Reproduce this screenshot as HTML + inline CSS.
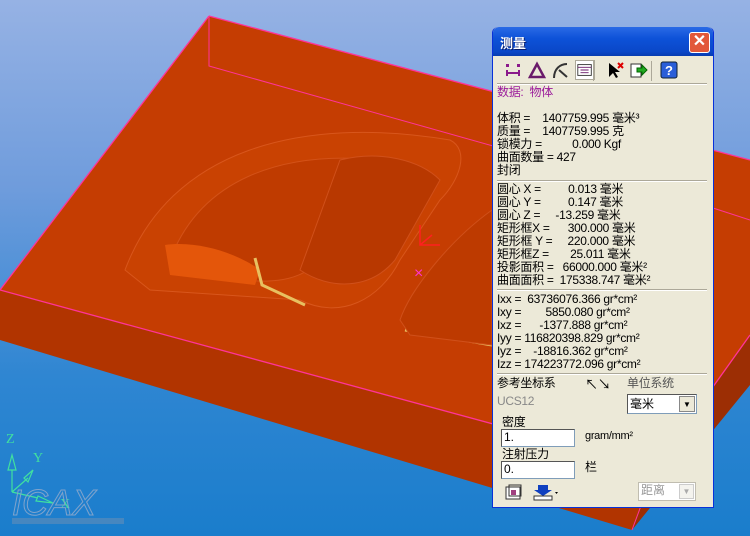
<!DOCTYPE html>
<html><head><meta charset="utf-8">
<style>
*{margin:0;padding:0;box-sizing:border-box}
body{width:750px;height:536px;overflow:hidden;position:relative;font-family:"Liberation Sans","Noto Sans CJK SC",sans-serif;background:linear-gradient(#96b2e4 0%,#6f9cdc 35%,#2f86d2 70%,#1a7dcc 100%)}
.p{position:absolute;left:492px;top:27px;width:222px;height:481px;background:#ece9d8;border:1px solid #0831d9;border-top:none;border-radius:6px 6px 0 0}
.tb{position:absolute;left:0;top:0;width:220px;height:29px;background:linear-gradient(#2a6ae6,#0d52d8 40%,#0a47c8 85%,#083cb0);border-radius:6px 6px 0 0}
.tb span{position:absolute;left:7px;top:6px;color:#fff;font-weight:bold;font-size:13px;text-shadow:1px 1px #0a1e6e}
.cl{position:absolute;left:196px;top:5px;width:21px;height:21px;background:#e2583a;border:1px solid #fff;border-radius:3px;color:#fff;font-size:16px;line-height:18px;text-align:center;font-weight:bold}
.t{position:absolute;left:4px;font-size:12px;line-height:13px;color:#000;white-space:pre;letter-spacing:-0.3px}
.sep{position:absolute;left:4px;width:210px;height:2px;border-top:1px solid #aca899;border-bottom:1px solid #fff}
.in{position:absolute;background:#fff;border:1px solid #7f9db9;border-top-color:#555;border-left-color:#555;font-size:12px;padding-left:2px;line-height:15px}
.ic{position:absolute;top:33px;width:20px;height:20px}
</style></head><body>
<svg width="750" height="536" style="position:absolute;left:0;top:0">
<polygon points="0,290 655,468 632,530 0,340" fill="#b13400"/>
<polygon points="655,468 750,335 750,385 632,530" fill="#9c2e04"/>
<polygon points="209,16 750,160 750,335 655,468 0,290" fill="#c53d02"/>
<polyline points="209,16 750,160" stroke="#ff3399" stroke-width="1.3" fill="none"/>
<polyline points="209,16 0,290 655,468 750,335" stroke="#ff3399" stroke-width="1.3" fill="none"/>
<polyline points="655,468 632,530" stroke="#ff3399" stroke-width="1" fill="none"/>
<polyline points="209,16 209,66 713,208 750,220" stroke="#ff3399" stroke-width="1" fill="none"/>
<path d="M125,270 C170,150 300,115 450,140 C470,150 460,180 440,200 L400,260 C380,300 340,320 300,300 L150,290 Z" fill="#c94202" stroke="#d8561c" stroke-width="1"/>
<path d="M170,260 C200,180 280,150 380,160 L330,250 C300,290 260,280 230,280 Z" fill="#bf3b00" stroke="#d35218"/>
<path d="M165,245 C200,240 240,255 260,270 L255,285 L170,275 Z" fill="#e4560a"/>
<path d="M340,160 C380,150 420,160 440,180 L395,260 C370,290 330,290 300,270 Z" fill="#b83800" stroke="#d0501a"/>
<path d="M255,258 L262,285 L305,305" stroke="#e8c060" stroke-width="3" fill="none"/>
<path d="M405,330 L492,345" stroke="#e8c060" stroke-width="3" fill="none"/>
<path d="M400,320 C410,290 450,240 492,210 L492,345 L410,335 Z" fill="#bd3a00" stroke="#d0501a"/>
<text x="414" y="278" fill="#ff33cc" font-size="16" font-family="Liberation Sans">×</text>
<path d="M420,225 L420,245 L440,245 M420,245 L432,235" stroke="#ff2020" stroke-width="1.5" fill="none"/>
<g stroke="#40e0a0" fill="none" stroke-width="1.2"><path d="M12,492 L12,470 M8,470 L12,455 L16,470 Z M12,492 L28,478 M24,478 L33,470 L28,482 Z M12,492 L38,498 M38,496 L53,503 L36,501 Z"/></g>
<text x="6" y="443" fill="#40e0a0" font-size="14" font-family="Liberation Serif">Z</text>
<text x="33" y="462" fill="#40e0a0" font-size="14" font-family="Liberation Serif">Y</text>
<text x="60" y="508" fill="#40e0a0" font-size="14" font-family="Liberation Serif">X</text>
<text x="12" y="515" fill="none" stroke="#7fa3cc" stroke-width="1" font-size="36" font-style="italic" font-family="Liberation Sans">ICAX</text>
<rect x="12" y="518" width="112" height="6" fill="#6f90b4" opacity=".5"/>
</svg>
<div class="p">
<div class="tb"><span>测量</span><div class="cl">✕</div></div>
<svg class="ic" style="left:10px" viewBox="0 0 20 20"><g fill="#8b1a8b"><rect x="3" y="4" width="3" height="3"/><rect x="14" y="4" width="3" height="3"/><rect x="3" y="10" width="2" height="6"/><rect x="15" y="10" width="2" height="6"/><rect x="5" y="12" width="10" height="2"/></g></svg>
<svg class="ic" style="left:34px" viewBox="0 0 20 20"><path d="M3,17 L10,4 L17,17 Z" stroke="#6a1a6a" stroke-width="2.5" fill="none"/></svg>
<svg class="ic" style="left:58px" viewBox="0 0 20 20"><path d="M3,18 C3,9 9,4 16,4 M8,10 L16,17" stroke="#333" stroke-width="2" fill="none"/></svg>
<svg class="ic" style="left:82px;background:#fff;border:1px solid #aca899" viewBox="0 0 20 20"><rect x="2" y="4" width="15" height="12" fill="#fff" stroke="#333"/><path d="M2,7 H17 M5,10 H14 M5,13 H14" stroke="#6a1a6a"/></svg>
<svg class="ic" style="left:112px" viewBox="0 0 20 20"><path d="M4,3 L4,17 L8,13 L11,18 L13,17 L10,12 L15,12 Z" fill="#000"/><path d="M13,3 L18,8 M18,3 L13,8" stroke="#d00" stroke-width="2"/></svg>
<svg class="ic" style="left:135px" viewBox="0 0 20 20"><rect x="3" y="4" width="10" height="13" fill="#fff" stroke="#333"/><path d="M9,8 H14 V5 L19,10 L14,15 V12 H9 Z" fill="#2a2" stroke="#060"/></svg>
<svg class="ic" style="left:166px" viewBox="0 0 20 20"><rect x="2" y="2" width="16" height="16" rx="2" fill="#2a5ed8" stroke="#123"/><text x="6" y="15" fill="#fff" font-size="13" font-weight="bold" font-family="Liberation Sans">?</text></svg>
<div style="position:absolute;left:100px;top:34px;width:1px;height:20px;background:#aca899"></div>
<div style="position:absolute;left:158px;top:34px;width:1px;height:20px;background:#aca899"></div>
<div class="sep" style="top:56px"></div>
<div class="t" style="top:59px;color:#9b1b9b">数据:  物体</div>
<div class="t" style="top:85px">体积 =    1407759.995 毫米³
质量 =    1407759.995 克
锁模力 =          0.000 Kgf
曲面数量 = 427
封闭</div>
<div class="sep" style="top:153px"></div>
<div class="t" style="top:156px">圆心 X =         0.013 毫米
圆心 Y =         0.147 毫米
圆心 Z =     -13.259 毫米
矩形框X =      300.000 毫米
矩形框 Y =     220.000 毫米
矩形框Z =       25.011 毫米
投影面积 =   66000.000 毫米²
曲面面积 =  175338.747 毫米²</div>
<div class="sep" style="top:262px"></div>
<div class="t" style="top:266px">Ixx =  63736076.366 gr*cm²
Ixy =        5850.080 gr*cm²
Ixz =      -1377.888 gr*cm²
Iyy = 116820398.829 gr*cm²
Iyz =    -18816.362 gr*cm²
Izz = 174223772.096 gr*cm²</div>
<div class="sep" style="top:346px"></div>
<div class="t" style="top:350px">参考坐标系</div>
<div class="t" style="top:368px;color:#888">UCS12</div>
<div class="t" style="left:92px;top:351px;font-size:13px">↖↘</div>
<div class="t" style="left:134px;top:350px;color:#555">单位系统</div>
<div class="in" style="left:134px;top:367px;width:70px;height:20px;line-height:18px">毫米<span style="position:absolute;right:1px;top:1px;width:16px;height:16px;background:#ece9d8;border:1px solid #888;font-size:8px;text-align:center;line-height:15px">▼</span></div>
<div class="t" style="left:9px;top:389px">密度</div>
<div class="in" style="left:8px;top:402px;width:74px;height:18px">1.</div>
<div class="t" style="left:92px;top:403px;font-size:11px">gram/mm²</div>
<div class="t" style="left:9px;top:421px">注射压力</div>
<div class="in" style="left:8px;top:434px;width:74px;height:18px">0.</div>
<div class="t" style="left:92px;top:434px">栏</div>
<svg style="position:absolute;left:12px;top:457px" width="18" height="16"><rect x="1" y="3" width="14" height="12" fill="#fff" stroke="#333"/><rect x="4" y="1" width="12" height="11" fill="none" stroke="#333"/><rect x="6" y="6" width="5" height="5" fill="#a04080"/></svg>
<svg style="position:absolute;left:40px;top:456px" width="26" height="18"><path d="M3,2 H13 V7 H17 L8,13 L-1,7 H3 Z" fill="#1040c0" transform="translate(2,0)"/><rect x="1" y="13" width="18" height="4" fill="#fff" stroke="#333"/><path d="M22,9 L25,9 L23.5,11 Z" fill="#000"/></svg>
<div class="in" style="left:145px;top:455px;width:58px;height:19px;color:#999;background:#fff;border-color:#c0bdb0">距离<span style="position:absolute;right:1px;top:1px;width:15px;height:15px;background:#f4f3ee;border:1px solid #ccc;font-size:8px;text-align:center;line-height:14px;color:#aaa">▼</span></div>
</div>
</body></html>
